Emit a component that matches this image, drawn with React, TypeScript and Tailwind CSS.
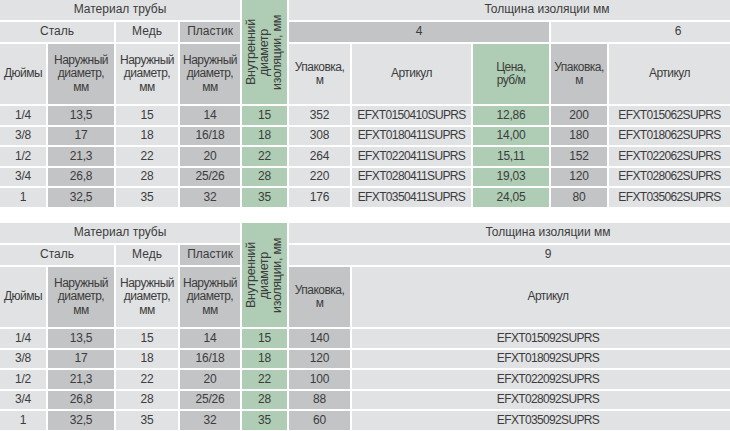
const light = 'bg-[#e1e2e4]'
const dark = 'bg-[#c3c4c6]'
const green = 'bg-[#aecdb4]'

const cell = 'flex items-center justify-center text-center leading-[13.5px]'
// column captions in the original are set in a condensed face
const caption = `${cell} tracking-[-0.5px]`

type Row = string[]

const topRows: Row[] = [
  ['1/4', '13,5', '15', '14', '15', '352', 'EFXT0150410SUPRS', '12,86', '200', 'EFXT015062SUPRS'],
  ['3/8', '17', '18', '16/18', '18', '308', 'EFXT0180411SUPRS', '14,00', '180', 'EFXT018062SUPRS'],
  ['1/2', '21,3', '22', '20', '22', '264', 'EFXT0220411SUPRS', '15,11', '152', 'EFXT022062SUPRS'],
  ['3/4', '26,8', '28', '25/26', '28', '220', 'EFXT0280411SUPRS', '19,03', '120', 'EFXT028062SUPRS'],
  ['1', '32,5', '35', '32', '35', '176', 'EFXT0350411SUPRS', '24,05', '80', 'EFXT035062SUPRS'],
]

const bottomRows: Row[] = [
  ['1/4', '13,5', '15', '14', '15', '140', 'EFXT015092SUPRS'],
  ['3/8', '17', '18', '16/18', '18', '120', 'EFXT018092SUPRS'],
  ['1/2', '21,3', '22', '20', '22', '100', 'EFXT022092SUPRS'],
  ['3/4', '26,8', '28', '25/26', '28', '88', 'EFXT028092SUPRS'],
  ['1', '32,5', '35', '32', '35', '60', 'EFXT035092SUPRS'],
]

const isCode = (v: string) => v.startsWith('EFXT')

// shared left part of both tables: pipe material + inner diameter
function PipeHeader() {
  return (
    <>
      <div className={`${cell} ${light} col-span-4`}>Материал трубы</div>
      <div className={`${green} row-span-3 flex items-center justify-center`}>
        <span className="rotate-180 text-center text-[12.5px] leading-[13px] tracking-[-0.3px] [writing-mode:vertical-rl]">
          Внутренний
          <br />
          диаметр
          <br />
          изоляции, мм
        </span>
      </div>
    </>
  )
}

function PipeSubHeader() {
  return (
    <>
      <div className={`${cell} ${light} col-span-2`}>Сталь</div>
      <div className={`${cell} ${light}`}>Медь</div>
      <div className={`${cell} ${dark}`}>Пластик</div>
    </>
  )
}

function OuterDiameter({ bg }: { bg: string }) {
  return (
    <div className={`${caption} ${bg}`}>
      Наружный
      <br />
      диаметр,
      <br />
      мм
    </div>
  )
}

function PipeColumns() {
  return (
    <>
      <div className={`${caption} ${light}`}>Дюймы</div>
      <OuterDiameter bg={dark} />
      <OuterDiameter bg={light} />
      <OuterDiameter bg={dark} />
    </>
  )
}

function Pack({ bg }: { bg: string }) {
  return (
    <div className={`${caption} ${bg}`}>
      Упаковка,
      <br />м
    </div>
  )
}

function DataCells({ row, colors }: { row: Row; colors: string[] }) {
  return (
    <>
      {[...row, ''].map((v, i) => (
        <div
          key={i}
          className={`${cell} ${colors[i]} ${isCode(v) ? 'tracking-[-0.65px]' : 'tracking-[-0.2px]'}`}
        >
          {v}
        </div>
      ))}
    </>
  )
}

function TopTable() {
  const colors = [light, dark, light, dark, green, light, light, green, dark, light, green]
  return (
    <div className="grid w-max grid-cols-[46px_66px_62px_60px_45px_61px_119px_76px_56px_121px_73px] grid-rows-[20px_20px_60px_19px_18px_19px_18px_19px] gap-[2px]">
      <PipeHeader />
      <div className={`${cell} ${light} col-span-6`}>Толщина изоляции мм</div>

      <PipeSubHeader />
      <div className={`${cell} ${dark} col-span-3`}>4</div>
      <div className={`${cell} ${light} col-span-3`}>6</div>

      <PipeColumns />
      <Pack bg={light} />
      <div className={`${caption} ${light}`}>Артикул</div>
      <div className={`${caption} ${green}`}>
        Цена,
        <br />
        руб/м
      </div>
      <Pack bg={dark} />
      <div className={`${caption} ${light}`}>Артикул</div>
      {/* price column of the 6 mm group lies past the right edge */}
      <div className={green} />

      {topRows.map((row) => (
        <DataCells key={row[0]} row={row} colors={colors} />
      ))}
    </div>
  )
}

function BottomTable() {
  const colors = [light, dark, light, dark, green, dark, light, green]
  return (
    <div className="mt-[16px] grid w-max grid-cols-[46px_66px_62px_60px_45px_61px_392px_61px] grid-rows-[20px_20px_60px_19px_18px_19px_18px_19px] gap-[2px]">
      <PipeHeader />
      <div className={`${cell} ${light} col-span-3`}>Толщина изоляции мм</div>

      <PipeSubHeader />
      <div className={`${cell} ${light} col-span-3`}>9</div>

      <PipeColumns />
      <Pack bg={dark} />
      <div className={`${caption} ${light}`}>Артикул</div>
      <div className={green} />

      {bottomRows.map((row) => (
        <DataCells key={row[0]} row={row} colors={colors} />
      ))}
    </div>
  )
}

export default function App() {
  return (
    <div className="h-[431px] w-[730px] overflow-hidden bg-white font-['Liberation_Sans',Arial,sans-serif] text-[12px] text-[#3c3c3c]">
      <TopTable />
      <BottomTable />
    </div>
  )
}
